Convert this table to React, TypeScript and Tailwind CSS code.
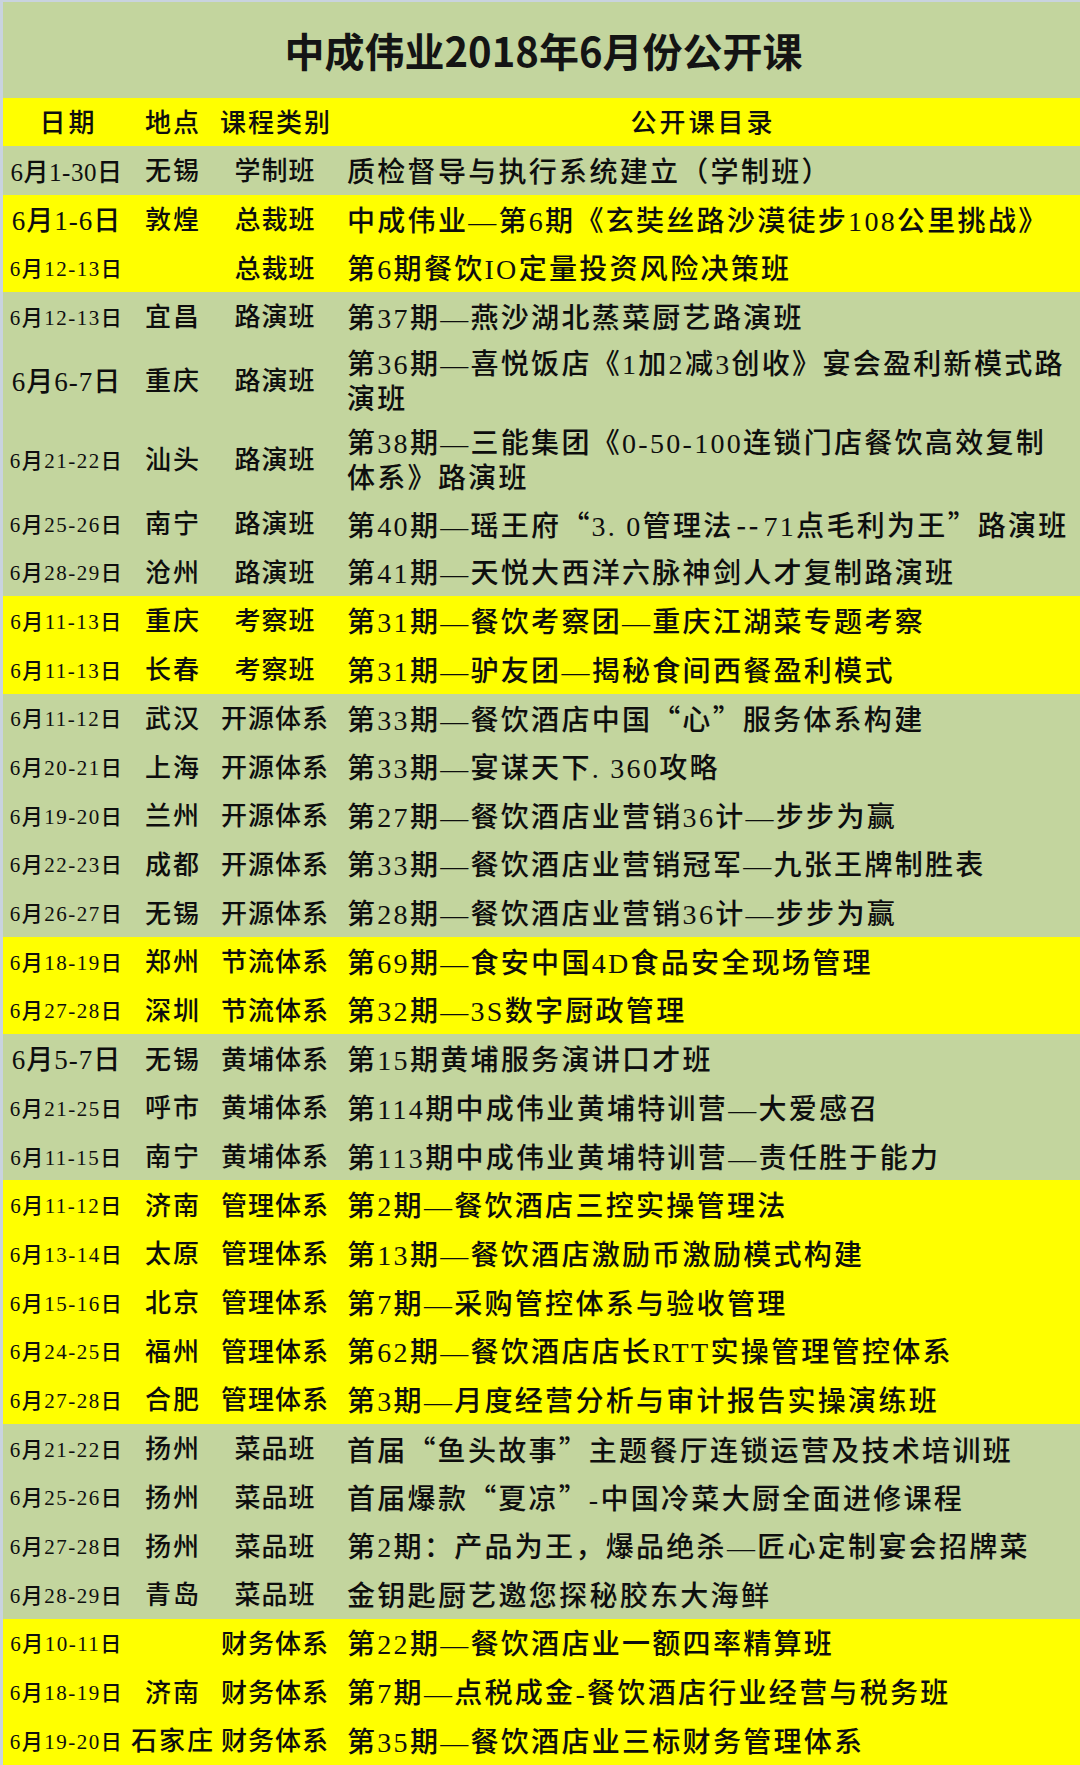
type Row = {
  date: string;
  size?: 'lg' | 'md' | 'sm';
  loc: string;
  cat: string;
  course: string[];
  yellow?: boolean;
};

const rows: Row[] = [
  { date: '6月1-30日', size: 'md', loc: '无锡', cat: '学制班', course: ['质检督导与执行系统建立（学制班）'] },
  { date: '6月1-6日', size: 'lg', loc: '敦煌', cat: '总裁班', course: ['中成伟业—第6期《玄奘丝路沙漠徒步108公里挑战》'], yellow: true },
  { date: '6月12-13日', loc: '', cat: '总裁班', course: ['第6期餐饮IO定量投资风险决策班'], yellow: true },
  { date: '6月12-13日', loc: '宜昌', cat: '路演班', course: ['第37期—燕沙湖北蒸菜厨艺路演班'] },
  { date: '6月6-7日', size: 'lg', loc: '重庆', cat: '路演班', course: ['第36期—喜悦饭店《1加2减3创收》宴会盈利新模式路', '演班'] },
  { date: '6月21-22日', loc: '汕头', cat: '路演班', course: ['第38期—三能集团《0-50-100连锁门店餐饮高效复制', '体系》路演班'] },
  { date: '6月25-26日', loc: '南宁', cat: '路演班', course: ['第40期—瑶王府“3. 0管理法--71点毛利为王”路演班'] },
  { date: '6月28-29日', loc: '沧州', cat: '路演班', course: ['第41期—天悦大西洋六脉神剑人才复制路演班'] },
  { date: '6月11-13日', loc: '重庆', cat: '考察班', course: ['第31期—餐饮考察团—重庆江湖菜专题考察'], yellow: true },
  { date: '6月11-13日', loc: '长春', cat: '考察班', course: ['第31期—驴友团—揭秘食间西餐盈利模式'], yellow: true },
  { date: '6月11-12日', loc: '武汉', cat: '开源体系', course: ['第33期—餐饮酒店中国“心”服务体系构建'] },
  { date: '6月20-21日', loc: '上海', cat: '开源体系', course: ['第33期—宴谋天下. 360攻略'] },
  { date: '6月19-20日', loc: '兰州', cat: '开源体系', course: ['第27期—餐饮酒店业营销36计—步步为赢'] },
  { date: '6月22-23日', loc: '成都', cat: '开源体系', course: ['第33期—餐饮酒店业营销冠军—九张王牌制胜表'] },
  { date: '6月26-27日', loc: '无锡', cat: '开源体系', course: ['第28期—餐饮酒店业营销36计—步步为赢'] },
  { date: '6月18-19日', loc: '郑州', cat: '节流体系', course: ['第69期—食安中国4D食品安全现场管理'], yellow: true },
  { date: '6月27-28日', loc: '深圳', cat: '节流体系', course: ['第32期—3S数字厨政管理'], yellow: true },
  { date: '6月5-7日', size: 'lg', loc: '无锡', cat: '黄埔体系', course: ['第15期黄埔服务演讲口才班'] },
  { date: '6月21-25日', loc: '呼市', cat: '黄埔体系', course: ['第114期中成伟业黄埔特训营—大爱感召'] },
  { date: '6月11-15日', loc: '南宁', cat: '黄埔体系', course: ['第113期中成伟业黄埔特训营—责任胜于能力'] },
  { date: '6月11-12日', loc: '济南', cat: '管理体系', course: ['第2期—餐饮酒店三控实操管理法'], yellow: true },
  { date: '6月13-14日', loc: '太原', cat: '管理体系', course: ['第13期—餐饮酒店激励币激励模式构建'], yellow: true },
  { date: '6月15-16日', loc: '北京', cat: '管理体系', course: ['第7期—采购管控体系与验收管理'], yellow: true },
  { date: '6月24-25日', loc: '福州', cat: '管理体系', course: ['第62期—餐饮酒店店长RTT实操管理管控体系'], yellow: true },
  { date: '6月27-28日', loc: '合肥', cat: '管理体系', course: ['第3期—月度经营分析与审计报告实操演练班'], yellow: true },
  { date: '6月21-22日', loc: '扬州', cat: '菜品班', course: ['首届“鱼头故事”主题餐厅连锁运营及技术培训班'] },
  { date: '6月25-26日', loc: '扬州', cat: '菜品班', course: ['首届爆款“夏凉”-中国冷菜大厨全面进修课程'] },
  { date: '6月27-28日', loc: '扬州', cat: '菜品班', course: ['第2期：产品为王，爆品绝杀—匠心定制宴会招牌菜'] },
  { date: '6月28-29日', loc: '青岛', cat: '菜品班', course: ['金钥匙厨艺邀您探秘胶东大海鲜'] },
  { date: '6月10-11日', loc: '', cat: '财务体系', course: ['第22期—餐饮酒店业一额四率精算班'], yellow: true },
  { date: '6月18-19日', loc: '济南', cat: '财务体系', course: ['第7期—点税成金-餐饮酒店行业经营与税务班'], yellow: true },
  { date: '6月19-20日', loc: '石家庄', cat: '财务体系', course: ['第35期—餐饮酒店业三标财务管理体系'], yellow: true },
];

const dateCls = {
  lg: 'text-[27px] tracking-[1px]',
  md: 'text-[25px] tracking-[0.5px]',
  sm: 'text-[21px] tracking-[1.5px]',
};

// curly quotes and double hyphens are full width in the source sheet
function Line({ text }: { text: string }) {
  const parts = text.split(/([“”]|--)/);
  return (
    <div>
      {parts.map((p, k) =>
        p === '“' || p === '”' || p === '--' ? (
          <span key={k} className="font-['Noto_Sans_CJK_SC'] inline-block w-[30px] text-center">
            {p}
          </span>
        ) : (
          <span key={k}>{p}</span>
        ),
      )}
    </div>
  );
}

export default function App() {
  return (
    <div
      className="w-[1080px] h-[1765px] overflow-hidden bg-[#c3d59e] border-l-[3px] border-t-[2px] border-[#c9d3df] text-[#0e0e0e]"
      style={{ fontFamily: '"Liberation Serif", "Noto Sans CJK SC", serif' }}
    >
      {/* title */}
      <div className="h-[96px] flex items-center justify-center">
        <h1
          className="text-[40px] font-bold leading-none pl-[4px] text-[#141414]"
          style={{ fontFamily: '"Noto Sans CJK SC", "Liberation Sans", sans-serif' }}
        >
          中成伟业2018年6月份公开课
        </h1>
      </div>

      {/* header */}
      <div className="h-[48px] bg-[#ffff00] flex items-center pt-[2px] text-[26px] font-medium">
        <div className="w-[127px] text-center tracking-[3px] pl-[4px]">日期</div>
        <div className="w-[86px] text-center tracking-[2px]">地点</div>
        <div className="w-[118px] text-center tracking-[2px] pl-[2px]">课程类别</div>
        <div className="flex-1 text-center tracking-[3px] pr-[8px]">公开课目录</div>
      </div>

      {/* body */}
      {rows.map((r, i) => {
        const double = r.course.length > 1;
        return (
          <div
            key={i}
            className={`flex items-center font-medium pt-[4px] ${double ? 'h-[79px]' : 'h-[48.7px]'} ${r.yellow ? 'bg-[#ffff00]' : ''}`}
          >
            <div className={`w-[127px] text-center whitespace-nowrap leading-none ${dateCls[r.size ?? 'sm']}`}>{r.date}</div>
            <div className="w-[86px] text-center text-[26px] tracking-[2px] leading-none whitespace-nowrap">{r.loc}</div>
            <div className="w-[118px] text-center text-[26px] tracking-[1px] leading-none whitespace-nowrap">{r.cat}</div>
            <div className="flex-1 pl-[13px] text-[28px] tracking-[2.3px] leading-[35px] whitespace-nowrap">
              {r.course.map((line, j) => (
                <Line key={j} text={line} />
              ))}
            </div>
          </div>
        );
      })}
    </div>
  );
}
